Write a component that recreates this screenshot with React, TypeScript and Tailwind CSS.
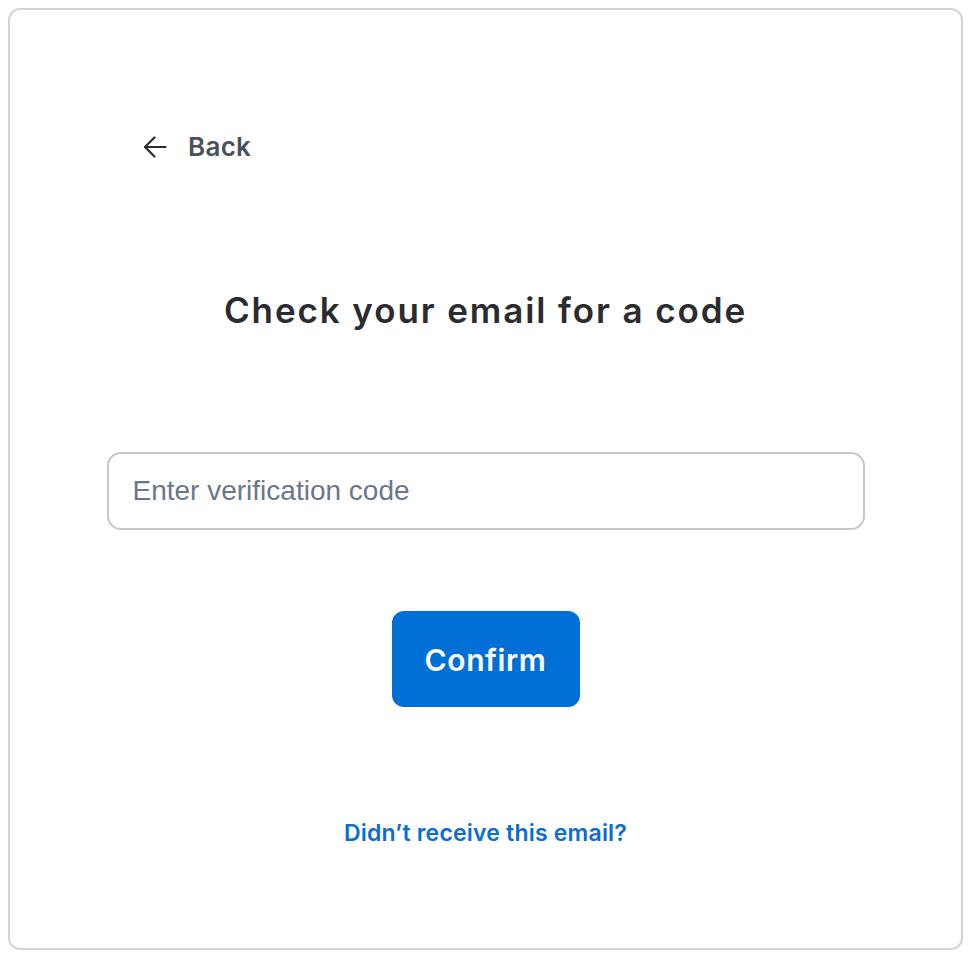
import { useState } from "react";

function BackArrow() {
    return (
        <svg width="24" height="24" viewBox="0 0 24 24" fill="none" stroke="#2a2c30" strokeWidth="2.2" strokeLinecap="round" strokeLinejoin="round">
            <path d="M22.5 12H2" />
            <path d="M11.5 2.5L2 12l9.5 9.5" />
        </svg>
    );
}

export default function App() {
    const [code, setCode] = useState("");

    return (
        <div className="min-h-screen bg-white pt-2 pl-2" style={{ fontFamily: "Inter, 'Noto Sans', sans-serif" }}>
            <div className="w-[955px] h-[942px] rounded-[12px] border-2 border-[#d4d4d8] flex flex-col">
                {/* Back */}
                <div className="pt-[121px] pl-[133px]">
                    <button className="flex items-center gap-[21px] text-[#4a515c] text-[26px] leading-8 font-semibold tracking-[0.3px]">
                        <BackArrow />
                        <span>Back</span>
                    </button>
                </div>

                {/* Heading */}
                <h1 className="mt-[125px] text-center text-[35px] leading-[44px] font-semibold tracking-[1.9px] text-[#2a2c30]">
                    Check your email for a code
                </h1>

                {/* Code input */}
                <input
                    value={code}
                    onChange={(e) => setCode(e.target.value)}
                    autoFocus
                    placeholder="Enter verification code"
                    className="mt-[120px] self-center w-[758px] h-[78px] rounded-[14px] border-2 border-[#c7c7cc] px-[24px] text-[28px] text-[#2a2c30] placeholder:text-[#6b7788] outline-none caret-[#2a2c30]"
                    style={{ fontFamily: "'Liberation Sans', Arial, sans-serif" }}
                />

                {/* Confirm */}
                <button className="mt-[81px] self-center w-[188px] h-[96px] rounded-[12px] bg-[#006fd6] text-white text-[30px] font-semibold tracking-[0.6px] pt-[3px]">
                    Confirm
                </button>

                {/* Resend */}
                <a href="#" className="mt-[112px] self-center text-[23px] leading-7 font-semibold tracking-[0.2px] text-[#0a6cd4]">
                    Didn’t receive this email?
                </a>
            </div>
        </div>
    );
}
